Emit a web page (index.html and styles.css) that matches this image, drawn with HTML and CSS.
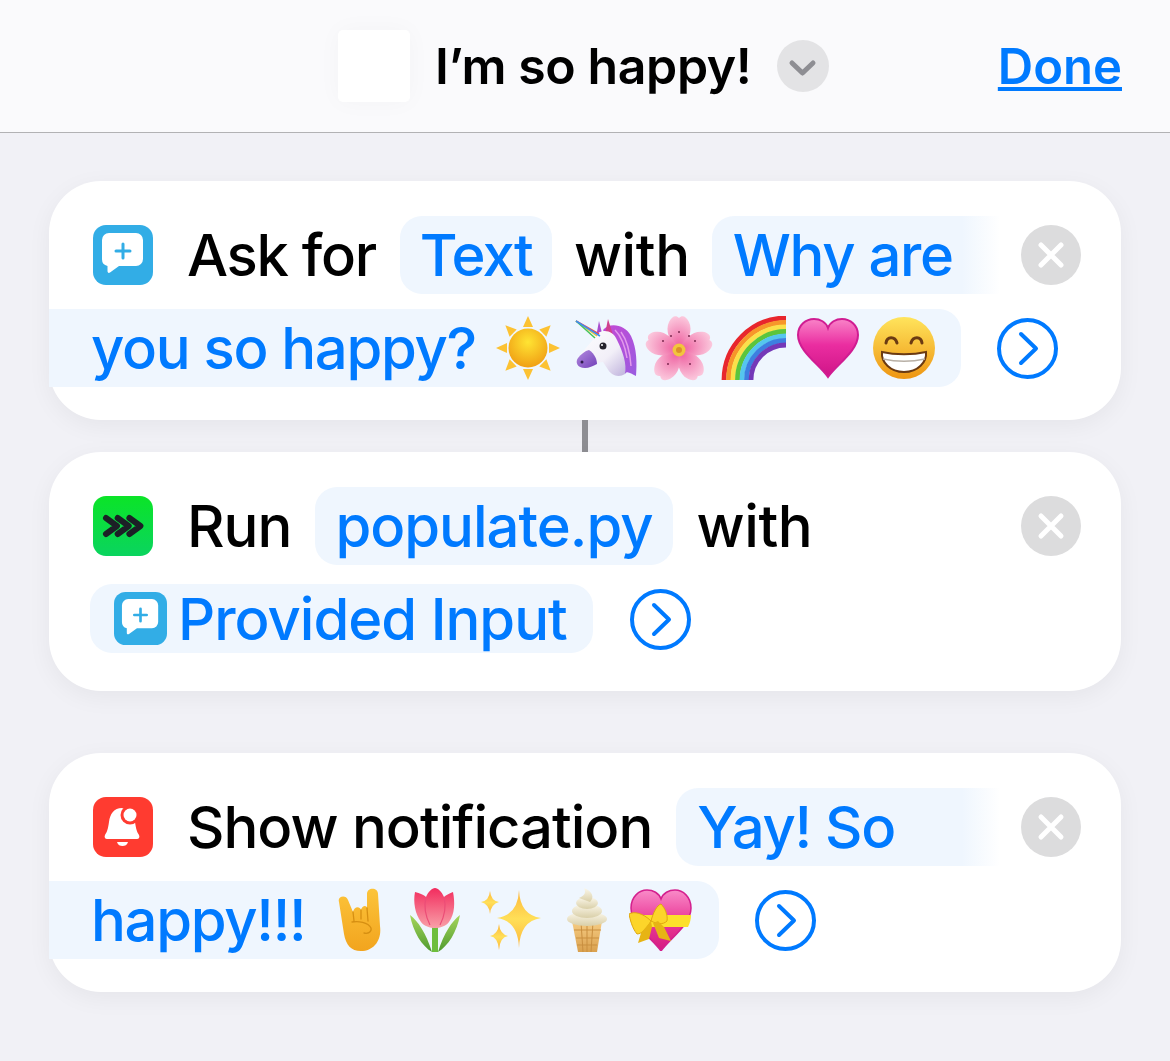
FILE: index.html
```html
<!DOCTYPE html>
<html lang="en">
  <head>
    <meta charset="UTF-8" />
    <meta name="viewport" content="width=device-width, initial-scale=1.0" />
    <title>I'm so happy!</title>
    <link rel="stylesheet" href="styles.css">
  </head>
  <body>
    <header class="topbar">
      <div class="shortcut-icon"></div>
      <h1 class="title">I’m so happy!</h1>
      <button class="title-menu">
        <svg viewBox="0 0 52 52" width="52" height="52"><polyline points="15,23 25.5,33 36,23" fill="none" stroke="#8e8e93" stroke-width="5" stroke-linecap="round" stroke-linejoin="round"/></svg>
      </button>
      <a class="done" href="#">Done</a>
    </header>

    <main class="actions">
      <!-- Ask for text -->
      <section class="card">
        <div class="row">
          <svg class="app-icon" viewBox="0 0 60 60" width="60" height="60">
            <rect width="60" height="60" rx="13" fill="#32ade6"/>
            <path d="M16 8h27a7 7 0 0 1 7 7v19a7 7 0 0 1-7 7H26l-9 6.5c-1.500 1-2.500 0-2.500-1.500V41A7 7 0 0 1 9 34V15a7 7 0 0 1 7-7z" fill="#fff"/>
            <path d="M30 19v14M23 26h14" stroke="#32ade6" stroke-width="3" stroke-linecap="round"/>
          </svg>
          <span class="label tight">Ask for</span>
          <span class="pill pill-short">Text</span>
          <span class="label loose">with</span>
          <span class="pill pill-fade tight">Why are</span>
          <button class="close">
            <svg viewBox="0 0 60 60" width="60" height="60"><path d="M20 20l20 20M40 20L20 40" stroke="#fff" stroke-width="5" stroke-linecap="round"/></svg>
          </button>
        </div>
        <div class="row">
          <span class="pill pill-wrap tight">
            you so happy?
            <svg class="emoji em-sun" viewBox="0 0 64 64" width="64" height="64">
              <defs><radialGradient id="sunFill" cx="50%" cy="35%" r="70%"><stop offset="0" stop-color="#ffe433"/><stop offset="1" stop-color="#ef9a12"/></radialGradient></defs>
              <g fill="#fcc233">
                <path d="M32 0l5 11H27z"/>
                <path d="M32 0l5 11H27z" transform="rotate(45 32 32)"/>
                <path d="M32 0l5 11H27z" transform="rotate(90 32 32)"/>
                <path d="M32 0l5 11H27z" transform="rotate(135 32 32)"/>
                <path d="M32 0l5 11H27z" transform="rotate(180 32 32)"/>
                <path d="M32 0l5 11H27z" transform="rotate(225 32 32)"/>
                <path d="M32 0l5 11H27z" transform="rotate(270 32 32)"/>
                <path d="M32 0l5 11H27z" transform="rotate(315 32 32)"/>
              </g>
              <circle cx="32" cy="32" r="19.500" fill="url(#sunFill)"/>
            </svg>
            <svg class="emoji em-unicorn" viewBox="0 0 64 64" width="64" height="64">
              <defs>
                <linearGradient id="muzzle" x1="0" y1="0" x2="1" y2="1"><stop offset="0" stop-color="#b48ce0"/><stop offset="1" stop-color="#7240b8"/></linearGradient>
                <linearGradient id="uniHead" x1="0" y1="0" x2="1" y2="1"><stop offset="0" stop-color="#ffffff"/><stop offset=".6" stop-color="#f2eff8"/><stop offset="1" stop-color="#bfb2dc"/></linearGradient>
                <linearGradient id="mane" x1="0" y1="0" x2="1" y2="1"><stop offset="0" stop-color="#c548d4"/><stop offset="1" stop-color="#9a5ce0"/></linearGradient>
              </defs>
              <path d="M28 14C34 6 50 8 56 20c6 12 6 28 5 40-5-2-9-6-11-2l-6-18z" fill="url(#mane)"/>
              <path d="M46 16c6 8 9 20 10 34M40 14c6 6 10 16 12 28" fill="none" stroke="#e39aec" stroke-width="1.500"/>
              <path d="M24 5l4 16-7 0z" fill="#a84ccf"/>
              <path d="M33 3l5 16-8-1z" fill="#d0418f"/>
              <path d="M20 20C26 12 38 14 42 24c6 12 10 24 8 34-6 4-14 2-18-6l-4-6c-6 0-12 6-18 6C2 52 0 46 3 42c5-8 13-14 17-22z" fill="url(#uniHead)"/>
              <path d="M3 42c3-4 7-7 11-8 6 4 8 10 8 14-4 2-8 4-12 4C2 52 0 46 3 42z" fill="url(#muzzle)"/>
              <circle cx="7" cy="46" r="1.500" fill="#2d1a4a"/>
              <g stroke-width="1.500">
                <path d="M1 5l23 13" stroke="#f04a4a"/>
                <path d="M1 5l21 15" stroke="#f6c42c"/>
                <path d="M1 5l19 17" stroke="#46c35a"/>
                <path d="M1 5l24 15" stroke="#3f8cf0"/>
              </g>
              <circle cx="28" cy="30" r="3.500" fill="#25222c"/>
              <circle cx="27" cy="29" r="1" fill="#fff"/>
            </svg>
            <svg class="emoji em-flower" viewBox="0 0 68 68" width="68" height="68">
              <defs><radialGradient id="petal" cx="50%" cy="90%" r="90%"><stop offset="0" stop-color="#ee5f9f"/><stop offset="1" stop-color="#fbc7dc"/></radialGradient></defs>
              <g fill="url(#petal)">
                <path d="M34 36C24 28 20 16 24 8c3-6 7-7 10-4 3-3 7-2 10 4 4 8 0 20-10 28z"/>
                <path d="M34 36C24 28 20 16 24 8c3-6 7-7 10-4 3-3 7-2 10 4 4 8 0 20-10 28z" transform="rotate(72 34 36)"/>
                <path d="M34 36C24 28 20 16 24 8c3-6 7-7 10-4 3-3 7-2 10 4 4 8 0 20-10 28z" transform="rotate(144 34 36)"/>
                <path d="M34 36C24 28 20 16 24 8c3-6 7-7 10-4 3-3 7-2 10 4 4 8 0 20-10 28z" transform="rotate(216 34 36)"/>
                <path d="M34 36C24 28 20 16 24 8c3-6 7-7 10-4 3-3 7-2 10 4 4 8 0 20-10 28z" transform="rotate(288 34 36)"/>
              </g>
              <g fill="#7c2a50">
                <circle cx="34" cy="18" r="1"/><circle cx="18" cy="27" r="1"/><circle cx="50" cy="27" r="1"/><circle cx="23" cy="50" r="1"/><circle cx="45" cy="50" r="1"/><circle cx="26" cy="22" r="1"/><circle cx="44" cy="22" r="1"/>
              </g>
              <circle cx="34" cy="36" r="6.500" fill="#f2c53d"/>
              <circle cx="34" cy="36" r="3" fill="#dd8f2c"/>
            </svg>
            <svg class="emoji em-rainbow" viewBox="0 0 66 64" width="66" height="64">
              <g fill="none" stroke-width="4.800">
                <path d="M4 64A62 62 0 0 1 66 2" stroke="#e8262d"/>
                <path d="M8.500 64A57.500 57.500 0 0 1 66 6.500" stroke="#f7962a"/>
                <path d="M13 64A53 53 0 0 1 66 11" stroke="#fbe04a"/>
                <path d="M17.500 64A48.500 48.500 0 0 1 66 15.500" stroke="#5cc53c"/>
                <path d="M22 64A44 44 0 0 1 66 20" stroke="#55c6ee"/>
                <path d="M26.500 64A39.500 39.500 0 0 1 66 24.500" stroke="#3d7fe0"/>
                <path d="M31 64A35 35 0 0 1 66 29" stroke="#7438b8"/>
              </g>
            </svg>
            <svg class="emoji em-heart" viewBox="0 0 64 64" width="64" height="64">
              <defs><linearGradient id="heartFill" x1="0" y1="0" x2="0" y2="1"><stop offset="0" stop-color="#f983c8"/><stop offset=".45" stop-color="#ea2da0"/><stop offset="1" stop-color="#cf1487"/></linearGradient></defs>
              <path d="M32 61C24 49 2 35 2 19 2 9 10 3 18 3c6 0 12 3 14 9 2-6 8-9 14-9 8 0 16 6 16 16 0 16-22 30-30 42z" fill="url(#heartFill)" stroke="#d01c92" stroke-width="2"/>
            </svg>
            <svg class="emoji em-grin" viewBox="0 0 64 64" width="64" height="64">
              <defs><linearGradient id="faceFill" x1="0" y1="0" x2="0" y2="1"><stop offset="0" stop-color="#ffe45c"/><stop offset="1" stop-color="#ee9512"/></linearGradient></defs>
              <circle cx="32" cy="32" r="31" fill="url(#faceFill)"/>
              <path d="M14 27c1-7 9-7 11 0M39 27c2-7 10-7 11 0" fill="none" stroke="#6b3a12" stroke-width="3" stroke-linecap="round"/>
              <path d="M10 36c13 3 31 3 44 0 1 10-8 20-22 20S9 46 10 36z" fill="#fff" stroke="#6b3a12" stroke-width="2"/>
              <path d="M11 43c14 3 28 3 42 0" fill="none" stroke="#b8b0a6" stroke-width="1.500"/>
            </svg>
          </span>
          <button class="more">
            <svg viewBox="0 0 61 61" width="61" height="61"><circle cx="30.500" cy="30.500" r="28.500" fill="none" stroke="#007aff" stroke-width="4"/><polyline points="24,16 39,30.500 24,45" fill="none" stroke="#007aff" stroke-width="4" stroke-linecap="round" stroke-linejoin="round"/></svg>
          </button>
        </div>
      </section>

      <div class="connector"></div>

      <!-- Run script -->
      <section class="card card-tight">
        <div class="row">
          <svg class="app-icon" viewBox="0 0 60 60" width="60" height="60">
            <defs><linearGradient id="runFill" x1="0" y1="0" x2="0" y2="1"><stop offset="0" stop-color="#0be427"/><stop offset="1" stop-color="#0ad45f"/></linearGradient></defs>
            <rect width="60" height="60" rx="13" fill="url(#runFill)"/>
            <path d="M11 22l11 8-11 8M22.700 22l11 8-11 8M34.400 22l11 8-11 8" transform="translate(2 0)" fill="none" stroke="#1c2026" stroke-width="6" stroke-linecap="round" stroke-linejoin="round"/>
          </svg>
          <span class="label">Run</span>
          <span class="pill pill-file">populate.py</span>
          <span class="label loose">with</span>
          <button class="close">
            <svg viewBox="0 0 60 60" width="60" height="60"><path d="M20 20l20 20M40 20L20 40" stroke="#fff" stroke-width="5" stroke-linecap="round"/></svg>
          </button>
        </div>
        <div class="row row-small">
          <span class="pill pill-var">
            <svg class="var-icon" viewBox="0 0 60 60" width="53" height="53">
              <rect width="60" height="60" rx="13" fill="#32ade6"/>
              <path d="M16 8h27a7 7 0 0 1 7 7v19a7 7 0 0 1-7 7H26l-9 6.500c-1.500 1-2.500 0-2.500-1.500V41A7 7 0 0 1 9 34V15a7 7 0 0 1 7-7z" fill="#fff"/>
              <path d="M30 19v14M23 26h14" stroke="#32ade6" stroke-width="3" stroke-linecap="round"/>
            </svg>
            Provided Input
          </span>
          <button class="more">
            <svg viewBox="0 0 61 61" width="61" height="61"><circle cx="30.500" cy="30.500" r="28.500" fill="none" stroke="#007aff" stroke-width="4"/><polyline points="24,16 39,30.500 24,45" fill="none" stroke="#007aff" stroke-width="4" stroke-linecap="round" stroke-linejoin="round"/></svg>
          </button>
        </div>
      </section>

      <!-- Show notification -->
      <section class="card card-last">
        <div class="row">
          <svg class="app-icon" viewBox="0 0 60 60" width="60" height="60">
            <rect width="60" height="60" rx="13" fill="#ff3b30"/>
            <path d="M29 11c-8 0-12 6-13 14-1 7-2 10-4 13-1 2 0 4 2 4h30c2 0 3-2 2-4-2-3-3-6-4-13-1-8-5-14-13-14z" fill="#fff"/>
            <path d="M24 45h11c-1 3-3 4-5.500 4S25 48 24 45z" fill="#fff"/>
            <circle cx="37" cy="18" r="9.500" fill="#ff3b30"/>
            <circle cx="37" cy="18" r="6.500" fill="#fff"/>
          </svg>
          <span class="label">Show notification</span>
          <span class="pill pill-fade tight">Yay! So</span>
          <button class="close">
            <svg viewBox="0 0 60 60" width="60" height="60"><path d="M20 20l20 20M40 20L20 40" stroke="#fff" stroke-width="5" stroke-linecap="round"/></svg>
          </button>
        </div>
        <div class="row">
          <span class="pill pill-wrap tight">
            happy!!!
            <svg class="emoji em-hand" viewBox="0 0 43 64" width="43" height="64">
              <defs><linearGradient id="handFill" x1="0" y1="0" x2="0" y2="1"><stop offset="0" stop-color="#fcc43a"/><stop offset="1" stop-color="#f2a41e"/></linearGradient></defs>
              <path d="M1 14C-1 8 8 6 10 12l5 12c1-6 7-6 8-2 1-5 6-5 6-2V6c0-7 11-7 11 0l2 32c2 14-6 25-19 25C13 63 8 57 6 46z" fill="url(#handFill)"/>
              <path d="M15 24l1 9M23 22v9M29 20l1 13M14 34c6-1 16 0 19 6 1 4-3 6-7 5" fill="none" stroke="#d68f12" stroke-width="1.300" stroke-linecap="round"/>
            </svg>
            <svg class="emoji em-tulip" viewBox="0 0 50 64" width="50" height="64">
              <defs>
                <linearGradient id="tulipFill" x1="0" y1="0" x2="0" y2="1"><stop offset="0" stop-color="#f22c5e"/><stop offset="1" stop-color="#f8a0a8"/></linearGradient>
                <linearGradient id="leafFill" x1="0" y1="0" x2="0" y2="1"><stop offset="0" stop-color="#a6d65c"/><stop offset="1" stop-color="#4e9a2e"/></linearGradient>
              </defs>
              <path d="M0 27c8 6 16 18 22 37C12 58 3 44 0 27zM50 27c-8 6-16 18-22 37 10-6 19-20 22-37z" fill="url(#leafFill)"/>
              <rect x="22" y="36" width="6" height="28" fill="#6ebe3e"/>
              <path d="M5 4c5 1 9 3 11 5 2-5 6-9 9-9s7 4 9 9c2-2 6-4 9-5 2 10 2 22-4 30-3 4-9 6-14 6s-11-2-14-6C5 26 3 14 5 4z" fill="url(#tulipFill)"/>
              <path d="M16 9c-2 8-1 18 4 28M34 9c2 8 1 18-4 28" fill="none" stroke="#ec4d77" stroke-width="1.200"/>
            </svg>
            <svg class="emoji em-sparkles" viewBox="0 0 60 60" width="60" height="60">
              <defs><linearGradient id="sparkFill" x1="0" y1="0" x2="0" y2="1"><stop offset="0" stop-color="#fdb63c"/><stop offset=".5" stop-color="#ffdf58"/><stop offset="1" stop-color="#fdb63c"/></linearGradient></defs>
              <g fill="url(#sparkFill)">
                <path d="M38 0Q39 25 60 28 39 31 38 58 37 31 16 28 37 25 38 0z"/>
                <path d="M9 1Q10 11 18 12 10 14 9 24 8 14 0 12 8 11 9 1z"/>
                <path d="M18 34Q19 44 27 46 19 47 18 60 17 47 9 46 17 44 18 34z"/>
              </g>
            </svg>
            <svg class="emoji em-cone" viewBox="0 0 40 65" width="40" height="65">
              <defs>
                <linearGradient id="coneFill" x1="0" y1="0" x2="0" y2="1"><stop offset="0" stop-color="#f7cd84"/><stop offset="1" stop-color="#d9a04e"/></linearGradient>
                <linearGradient id="creamFill" x1="0" y1="0" x2="0" y2="1"><stop offset="0" stop-color="#fbf7ea"/><stop offset="1" stop-color="#d9cfa8"/></linearGradient>
              </defs>
              <path d="M5 33h30l-5 31H11z" fill="url(#coneFill)"/>
              <path d="M7 42h27M9 50h23M10 57h20M14 34l2 30M20 34v30M26 34l-2 30" stroke="#c98f40" stroke-width="1" fill="none"/>
              <ellipse cx="20" cy="31" rx="20" ry="7" fill="url(#creamFill)"/>
              <ellipse cx="20" cy="23" rx="15" ry="7" fill="url(#creamFill)"/>
              <ellipse cx="20" cy="15" rx="11" ry="6" fill="url(#creamFill)"/>
              <path d="M12 10C16 8 20 6 17 0c8 3 11 9 6 14z" fill="url(#creamFill)"/>
            </svg>
            <svg class="emoji em-gift" viewBox="0 0 63 62" width="63" height="62">
              <defs><linearGradient id="giftFill" x1="0" y1="0" x2="0" y2="1"><stop offset="0" stop-color="#f98bc8"/><stop offset=".5" stop-color="#ea3a98"/><stop offset="1" stop-color="#d41c80"/></linearGradient></defs>
              <path d="M32 62C24 50 2 36 2 19 2 8 10 1 18 1c6 0 12 3 14 9 2-6 8-9 14-9 8 0 16 7 16 18 0 17-22 31-30 43z" fill="url(#giftFill)" stroke="#d4208e" stroke-width="1.500"/>
              <path d="M1 26h61c0 4-1 8-3 12H4c-2-4-3-8-3-12z" fill="#fde02c"/>
              <path d="M22 32C14 24 5 22 0 25c1 5 3 14 8 20 5 0 10-6 14-13z" fill="#fcd52a" stroke="#dfa70e" stroke-width="1"/>
              <path d="M22 32C24 24 28 16 32 15c4 4 7 11 6 17-4 4-10 3-16 0z" fill="#fcd52a" stroke="#dfa70e" stroke-width="1"/>
              <path d="M22 32l-10 12-3 10 11-4 3-12zM24 34l6 15 12 3-7-14-6-6z" fill="#e7b414"/>
            </svg>
          </span>
          <button class="more">
            <svg viewBox="0 0 61 61" width="61" height="61"><circle cx="30.500" cy="30.500" r="28.500" fill="none" stroke="#007aff" stroke-width="4"/><polyline points="24,16 39,30.500 24,45" fill="none" stroke="#007aff" stroke-width="4" stroke-linecap="round" stroke-linejoin="round"/></svg>
          </button>
        </div>
      </section>
    </main>
  </body>
</html>
```

FILE: styles.css
```css
/* Page */
body {
  margin: 0;
  min-height: 1061px;
  background-color: #f1f1f6;
  font-family: Inter, "Noto Sans", sans-serif;
  color: #000;
  overflow: hidden;
}

button {
  padding: 0;
  border: none;
  background: none;
  display: block;
  flex: none;
}

svg {
  display: block;
  flex: none;
}

/* Top bar */
.topbar {
  height: 132px;
  padding: 0 48px 0 338px;
  background-color: #fafafc;
  border-bottom: 1px solid #b2b2b4;
  display: flex;
  align-items: center;
}

.shortcut-icon {
  width: 72px;
  height: 72px;
  background-color: #fff;
  border-radius: 5px;
  box-shadow: 0 0 24px rgba(0, 0, 0, 0.03);
}

.title {
  margin: 0 0 0 25px;
  font-size: 50px;
  font-weight: 560;
  letter-spacing: -0.4px;
}

.title-menu {
  width: 52px;
  height: 52px;
  margin-left: 26px;
  border-radius: 50%;
  background-color: #e3e3e5;
}

.done {
  margin-left: auto;
  font-size: 49px;
  font-weight: 560;
  color: #007aff;
}

/* Action cards */
.actions {
  padding: 48px 49px 0;
}

.card {
  height: 239px;
  box-sizing: border-box;
  padding: 35px 40px 0 44px;
  background-color: #fff;
  border-radius: 52px;
  box-shadow: 0 6px 24px rgba(0, 0, 0, 0.05);
  display: flex;
  flex-direction: column;
  gap: 15px;
}

.card-tight {
  gap: 19px;
}

.card-last {
  margin-top: 62px;
}

.connector {
  width: 6px;
  height: 32px;
  margin-left: 533px;
  background-color: #8e8e93;
}

.row {
  height: 78px;
  display: flex;
  align-items: center;
  gap: 24px;
}

.row-small {
  height: 69px;
  gap: 37px;
  margin-left: -3px;
}

.row-small .more {
  margin-top: 2px;
}

.app-icon {
  margin-right: 10px;
}

.label {
  font-size: 58px;
  font-weight: 450;
  letter-spacing: -1px;
  white-space: nowrap;
}

.pill {
  height: 78px;
  padding: 0 21px;
  display: flex;
  align-items: center;
  flex: none;
  background-color: #eff6fe;
  border-radius: 22px;
  color: #007aff;
  font-size: 58px;
  font-weight: 450;
  letter-spacing: -1px;
  white-space: nowrap;
}

.tight {
  letter-spacing: -1.3px;
}

.loose {
  margin-right: -2px;
  letter-spacing: -0.4px;
}

.pill-short {
  margin-right: -2px;
  padding: 0 20px;
  letter-spacing: -1.8px;
}

.pill-file {
  padding: 0 20px;
}

.pill-fade {
  flex: 1;
  margin-right: -3px;
  background: linear-gradient(to left, #fff 0, #eff6fe 38px);
  border-radius: 22px 0 0 22px;
}

.pill-wrap {
  margin-left: -44px;
  padding: 0 25px 0 42px;
  border-radius: 0 22px 22px 0;
  margin-right: 12px;
}

.pill-var {
  height: 69px;
  padding: 0 26px 0 24px;
}

.var-icon {
  margin-right: 11px;
}

.close {
  width: 60px;
  height: 60px;
  margin-left: auto;
  border-radius: 50%;
  background-color: #dcdcdd;
}

.emoji {
  margin-left: 8px;
}

.em-sun {
  margin-left: 20px;
}

.em-unicorn {
  margin-left: 15px;
}

.em-flower {
  margin-left: 6px;
}

.em-rainbow {
  margin-left: 7px;
}

.em-heart {
  margin-left: 10px;
}

.em-grin {
  margin-left: 12px;
}

.em-hand {
  margin-left: 33px;
}

.em-tulip {
  margin-left: 29px;
}

.em-sparkles {
  margin-left: 21px;
}

.em-cone {
  margin-left: 26px;
}

.em-gift {
  margin-left: 22px;
  margin-right: 2px;
}
```
